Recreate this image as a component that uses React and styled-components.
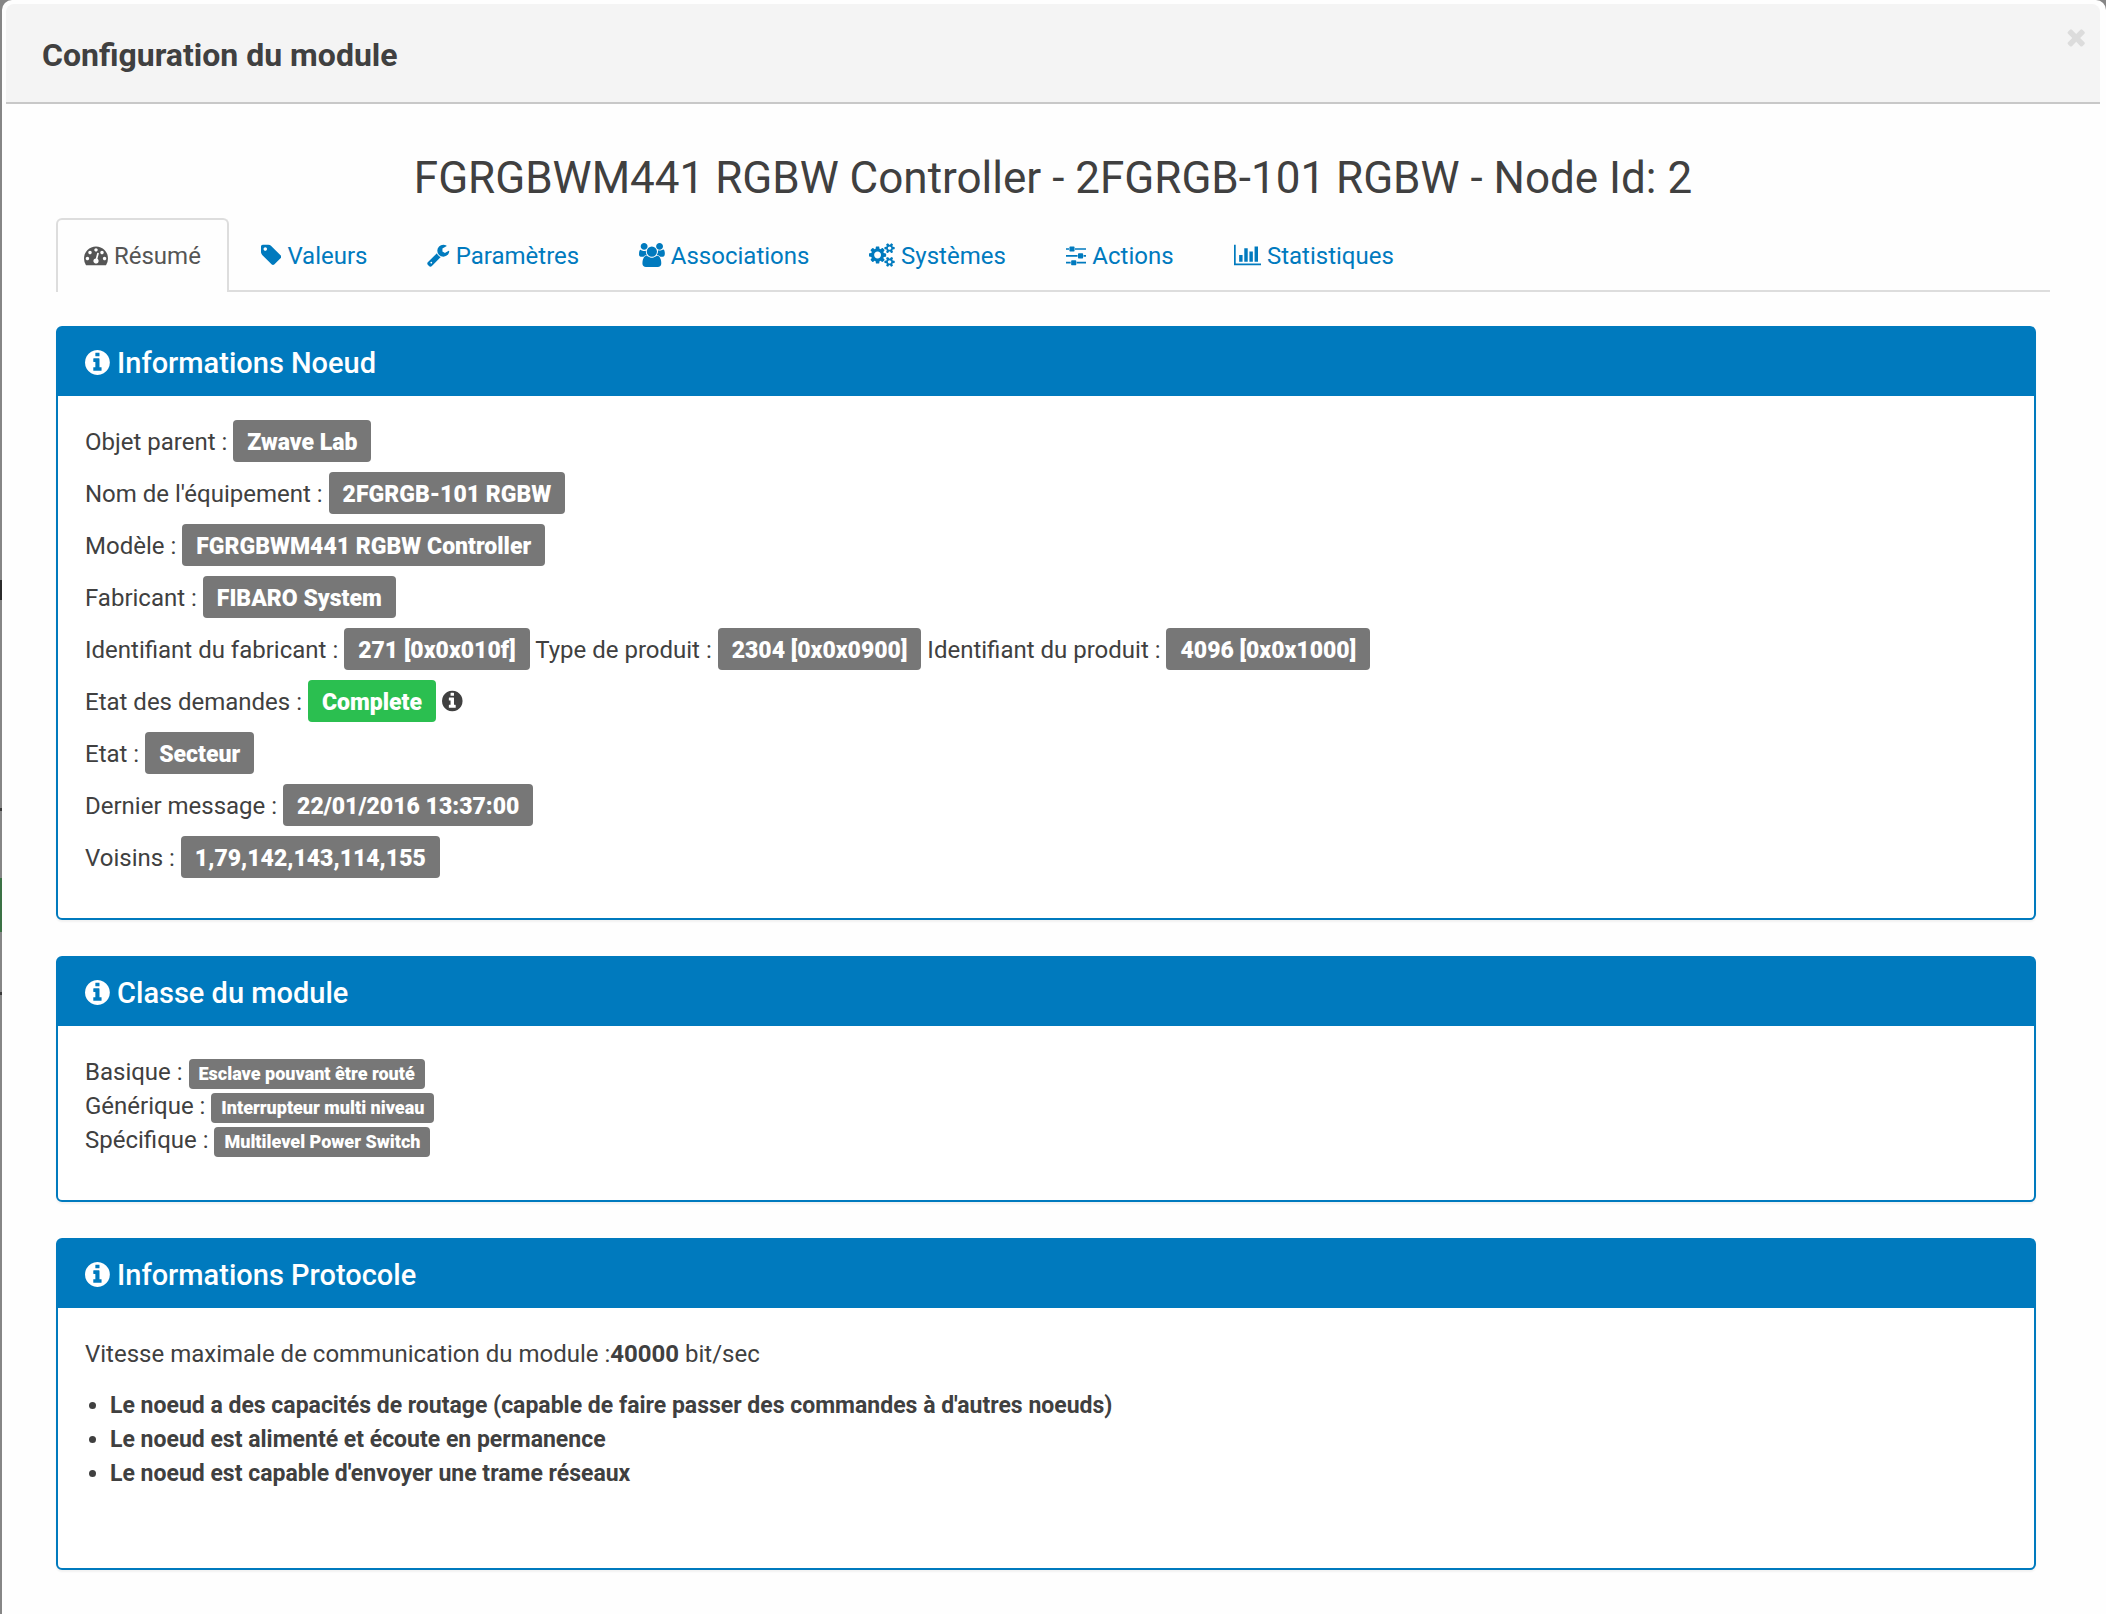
import React from "react";
import styled, { createGlobalStyle } from "styled-components";

const BLUE = "#007abe";

const GlobalStyle = createGlobalStyle`
  *, *::before, *::after { box-sizing: border-box; }
  body {
    margin: 0;
    background: #868686;
    color: #404040;
    font-family: Roboto, "Liberation Sans", sans-serif;
    font-size: 24px;
    line-height: 34px;
  }
`;

/* Sliver of the dimmed page that shows on the left of the dialog */
const Backdrop = styled.div`
  min-height: 100vh;
  padding-left: 2px;
  display: flex;
  background: linear-gradient(
    to bottom,
    #868686 580px, #2b2b2b 580px, #2b2b2b 600px,
    #868686 600px, #868686 808px, #3a3a3a 808px, #3a3a3a 811px,
    #868686 811px, #868686 878px, #3c7245 878px, #3c7245 932px,
    #868686 932px, #868686 992px, #3a3a3a 992px, #3a3a3a 995px,
    #868686 995px
  );
`;

const Dialog = styled.section`
  flex: 1;
  min-width: 0;
  padding: 4px 6px 4px 4px;
  background: #fefefe;
  border-radius: 10px 10px 0 0;
`;

const DialogHeader = styled.header`
  display: flex;
  justify-content: space-between;
  align-items: flex-start;
  padding: 20px 14px 27px 36px;
  background: #f4f4f4;
  border-bottom: 2px solid #c8c8c8;
  border-radius: 8px 8px 0 0;
`;

const DialogTitle = styled.h1`
  margin: 11px 0 0;
  font-size: 32px;
  line-height: 40px;
  font-weight: 700;
`;

const CloseButton = styled.button`
  display: flex;
  padding: 0;
  border: 0;
  background: none;
  color: #dcdcdc;
  font-size: 26px;
  cursor: pointer;
`;

const DialogBody = styled.div`
  padding: 46px 50px 40px;
`;

const NodeTitle = styled.h2`
  margin: 0 0 12px;
  font-size: 44px;
  line-height: 56px;
  font-weight: 400;
  text-align: center;
`;

const Svg = styled.svg`
  height: 1em;
  width: auto;
  vertical-align: -0.14em;
  fill: currentColor;
`;

const TabList = styled.nav`
  display: flex;
  gap: 4px;
  border-bottom: 2px solid #ddd;
`;

const Tab = styled.a`
  margin-bottom: -2px;
  padding: 19px 26px 17px;
  border: 2px solid ${(p) => (p.$active ? "#ddd" : "transparent")};
  border-bottom: ${(p) => (p.$active ? "0" : "2px solid transparent")};
  border-radius: 6px 6px 0 0;
  background: ${(p) => (p.$active ? "#fefefe" : "transparent")};
  color: ${(p) => (p.$active ? "#555" : BLUE)};
  text-decoration: none;
`;

const Panels = styled.div`
  display: flex;
  flex-direction: column;
  gap: 36px;
  padding: 34px 14px 0 0;
`;

const PanelBox = styled.section`
  border: 2px solid ${BLUE};
  border-radius: 6px;
  background: #fff;
  box-shadow: 0 2px 2px rgba(0, 0, 0, 0.05);
`;

const PanelTitle = styled.h3`
  margin: 0;
  padding: 18px 27px 16px;
  background: ${BLUE};
  color: #fff;
  font-size: 29px;
  line-height: 34px;
  font-weight: 500;
`;

const PanelBody = styled.div`
  display: flex;
  flex-direction: column;
  gap: ${(p) => (p.$dense ? "0" : "18px")};
  padding: 29px 27px ${(p) => (p.$tall ? "77px" : "43px")};
`;

const Row = styled.p`
  margin: 0;
`;

const Label = styled.span`
  padding: ${(p) => (p.$small ? "4px 10px 5px" : "9px 14px 6px")};
  border-radius: 4px;
  background: ${(p) => (p.$success ? "#2bbf50" : "#777")};
  color: #fff;
  font-size: ${(p) => (p.$small ? "18px" : "23px")};
  line-height: 1;
  font-weight: 900;
`;

const Capabilities = styled.ul`
  margin: 0;
  padding-left: 25px;
  font-size: 23px;
  font-weight: 700;
`;

const ICONS = {
  info: ["128 0 1536 1792", "M1152 1376v-160q0-14-9-23t-23-9h-96v-512q0-14-9-23t-23-9h-320q-14 0-23 9t-9 23v160q0 14 9 23t23 9h96v320h-96q-14 0-23 9t-9 23v160q0 14 9 23t23 9h448q14 0 23-9t9-23zm-128-896v-160q0-14-9-23t-23-9h-192q-14 0-23 9t-9 23v160q0 14 9 23t23 9h192q14 0 23-9t9-23zm640 416q0 209-103 385.5t-279.5 279.5-385.5 103-385.5-103-279.5-279.5-103-385.5 103-385.5 279.5-279.5 385.5-103 385.5 103 279.5 279.5 103 385.5z"],
  gauge: ["0 0 1792 1792", "M384 1152q0-53-37.5-90.5t-90.5-37.5-90.5 37.5-37.5 90.5 37.5 90.5 90.5 37.5 90.5-37.5 37.5-90.5zm192-448q0-53-37.5-90.5t-90.5-37.5-90.5 37.5-37.5 90.5 37.5 90.5 90.5 37.5 90.5-37.5 37.5-90.5zm428 481l101-382q6-26-7.5-48.5t-38.5-29.5-48 6.5-30 39.5l-101 382q-60 5-107 43.5t-63 98.5q-20 77 20 146t117 89 146-20 89-117q16-60-6-117t-72-91zm660-33q0-53-37.5-90.5t-90.5-37.5-90.5 37.5-37.5 90.5 37.5 90.5 90.5 37.5 90.5-37.5 37.5-90.5zm-640-640q0-53-37.5-90.5t-90.5-37.5-90.5 37.5-37.5 90.5 37.5 90.5 90.5 37.5 90.5-37.5 37.5-90.5zm448 192q0-53-37.5-90.5t-90.5-37.5-90.5 37.5-37.5 90.5 37.5 90.5 90.5 37.5 90.5-37.5 37.5-90.5zm320 448q0 261-141 483-19 29-54 29h-1402q-35 0-54-29-141-221-141-483 0-182 71-348t191-286 286-191 348-71 348 71 286 191 191 286 71 348z"],
  tag: ["128 0 1536 1792", "M576 448q0-53-37.5-90.5t-90.5-37.5-90.5 37.5-37.5 90.5 37.5 90.5 90.5 37.5 90.5-37.5 37.5-90.5zm1067 576q0 53-37 90l-491 492q-39 37-91 37-53 0-90-37l-715-716q-38-37-64.5-101t-26.5-117v-416q0-52 38-90t90-38h416q53 0 117 26.5t102 64.5l715 714q37 39 37 91z"],
  wrench: ["64 0 1664 1792", "M448 1472q0-26-19-45t-45-19-45 19-19 45 19 45 45 19 45-19 19-45zm644-420l-682 682q-37 37-90 37-52 0-91-37l-106-108q-38-36-38-90 0-53 38-91l681-681q39 98 114.5 173.5t173.5 114.5zm634-435q0 39-23 106-47 134-164.5 217.5t-258.5 83.5q-185 0-316.5-131.5t-131.5-316.5 131.5-316.5 316.5-131.5q58 0 121.5 16.5t107.5 46.5q16 11 16 28t-16 28l-293 169v224l193 107q5-3 79-48.5t135.5-81 70.5-35.5q15 0 23.5 10t8.5 25z"],
  users: ["0 0 1920 1792", "M593 896q-162 5-265 128h-134q-82 0-138-40.5t-56-118.5q0-353 124-353 6 0 43.5 21t97.5 42.5 119 21.5q67 0 133-23-5 37-5 66 0 159 93 286zm1071 637q0 120-73 189.5t-194 69.5h-874q-121 0-194-69.5t-73-189.5q0-53 3.5-103.5t14-109 26.5-108.5 43-97.5 62-81 85.5-53.5 111.5-20q10 0 43 21.5t73 48 107 48 135 21.5 135-21.5 107-48 73-48 43-21.5q61 0 111.5 20t85.5 53.5 62 81 43 97.5 26.5 108.5 14 109 3.5 103.5zm-1024-1277q0 106-75 181t-181 75-181-75-75-181 75-181 181-75 181 75 75 181zm704 384q0 159-112.5 271.5t-271.5 112.5-271.5-112.5-112.5-271.5 112.5-271.5 271.5-112.5 271.5 112.5 112.5 271.5zm576 225q0 78-56 118.5t-138 40.5h-134q-103-123-265-128 93-127 93-286 0-29-5-66 66 23 133 23 59 0 119-21.5t97.5-42.5 43.5-21q124 0 124 353zm-128-609q0 106-75 181t-181 75-181-75-75-181 75-181 181-75 181 75 75 181z"],
  cogs: ["0 0 1920 1792", "M896 896q0-106-75-181t-181-75-181 75-75 181 75 181 181 75 181-75 75-181zm768 512q0-52-38-90t-90-38-90 38-38 90q0 53 37.5 90.5t90.5 37.5 90.5-37.5 37.5-90.5zm0-1024q0-52-38-90t-90-38-90 38-38 90q0 53 37.5 90.5t90.5 37.5 90.5-37.5 37.5-90.5zm-384 421v185q0 10-7 19.5t-16 10.5l-155 24q-11 35-32 76 34 48 90 115 7 11 7 20 0 12-7 19-23 30-82.5 89.5t-78.5 59.5q-11 0-21-7l-115-90q-37 19-77 31-11 108-23 155-7 24-30 24h-186q-11 0-20-7.5t-10-17.5l-23-153q-34-10-75-31l-118 89q-7 7-20 7-11 0-21-8-144-133-144-160 0-9 7-19 10-14 41-53t47-61q-23-44-35-82l-152-24q-10-1-17-9.5t-7-19.5v-185q0-10 7-19.5t16-10.5l155-24q11-35 32-76-34-48-90-115-7-11-7-20 0-12 7-20 22-30 82-89t79-59q11 0 21 7l115 90q34-18 77-32 11-108 23-154 7-24 30-24h186q11 0 20 7.5t10 17.5l23 153q34 10 75 31l118-89q8-7 20-7 11 0 21 8 144 133 144 160 0 8-7 19-12 16-42 54t-45 60q23 48 34 82l152 23q10 2 17 10.5t7 19.5zm640 533v140q0 16-149 31-12 27-30 52 51 113 51 138 0 4-4 7-122 71-124 71-8 0-46-47t-52-68q-20 2-30 2t-30-2q-14 21-52 68t-46 47q-2 0-124-71-4-3-4-7 0-25 51-138-18-25-30-52-149-15-149-31v-140q0-16 149-31 13-29 30-52-51-113-51-138 0-4 4-7 4-2 35-20t59-34 30-16q8 0 46 46.5t52 67.5q20-2 30-2t30 2q51-71 92-112l6-2q4 0 124 70 4 3 4 7 0 25-51 138 17 23 30 52 149 15 149 31zm0-1024v140q0 16-149 31-12 27-30 52 51 113 51 138 0 4-4 7-122 71-124 71-8 0-46-47t-52-68q-20 2-30 2t-30-2q-14 21-52 68t-46 47q-2 0-124-71-4-3-4-7 0-25 51-138-18-25-30-52-149-15-149-31v-140q0-16 149-31 13-29 30-52-51-113-51-138 0-4 4-7 4-2 35-20t59-34 30-16q8 0 46 46.5t52 67.5q20-2 30-2t30 2q51-71 92-112l6-2q4 0 124 70 4 3 4 7 0 25-51 138 17 23 30 52 149 15 149 31z"],
  sliders: ["0 0 1536 1792", "M352 1408v128h-352v-128h352zm352-128q26 0 45 19t19 45v256q0 26-19 45t-45 19h-256q-26 0-45-19t-19-45v-256q0-26 19-45t45-19h256zm160-384v128h-864v-128h864zm-640-512v128h-224v-128h224zm1312 1024v128h-736v-128h736zm-960-1152q26 0 45 19t19 45v256q0 26-19 45t-45 19h-256q-26 0-45-19t-19-45v-256q0-26 19-45t45-19h256zm640 512q26 0 45 19t19 45v256q0 26-19 45t-45 19h-256q-26 0-45-19t-19-45v-256q0-26 19-45t45-19h256zm320 128v128h-224v-128h224zm0-512v128h-864v-128h864z"],
  chart: ["0 0 2048 1792", "M640 896v512h-256v-512h256zm384-512v1024h-256v-1024h256zm1024 1152v128h-2048v-1536h128v1408h1920zm-640-896v768h-256v-768h256zm384-384v1152h-256v-1152h256z"],
  times: ["192 0 1408 1792", "M1490 1322q0 40-28 68l-136 136q-28 28-68 28t-68-28l-294-294-294 294q-28 28-68 28t-68-28l-136-136q-28-28-28-68t28-68l294-294-294-294q-28-28-28-68t28-68l136-136q28-28 68-28t68 28l294 294 294-294q28-28 68-28t68 28l136 136q28 28 28 68t-28 68l-294 294 294 294q28 28 28 68z"],
};

function Icon({ name }) {
  const [viewBox, d] = ICONS[name];
  return (
    <Svg viewBox={viewBox} aria-hidden="true">
      <path d={d} />
    </Svg>
  );
}

const TABS = [
  ["gauge", "Résumé"],
  ["tag", "Valeurs"],
  ["wrench", "Paramètres"],
  ["users", "Associations"],
  ["cogs", "Systèmes"],
  ["sliders", "Actions"],
  ["chart", "Statistiques"],
];

function Panel({ title, dense, tall, children }) {
  return (
    <PanelBox>
      <PanelTitle>
        <Icon name="info" /> {title}
      </PanelTitle>
      <PanelBody $dense={dense} $tall={tall}>{children}</PanelBody>
    </PanelBox>
  );
}

export default function App() {
  return (
    <>
      <GlobalStyle />
      <Backdrop>
        <Dialog role="dialog" aria-labelledby="dialog-title">
          <DialogHeader>
            <DialogTitle id="dialog-title">Configuration du module</DialogTitle>
            <CloseButton type="button" aria-label="Fermer">
              <Icon name="times" />
            </CloseButton>
          </DialogHeader>
          <DialogBody>
            <NodeTitle>FGRGBWM441 RGBW Controller - 2FGRGB-101 RGBW - Node Id: 2</NodeTitle>
            <TabList>
              {TABS.map(([icon, text], i) => (
                <Tab key={text} href={`#${icon}`} $active={i === 0}>
                  <Icon name={icon} /> {text}
                </Tab>
              ))}
            </TabList>
            <Panels>
              <Panel title="Informations Noeud">
                <Row>Objet parent : <Label>Zwave Lab</Label></Row>
                <Row>Nom de l'équipement : <Label>2FGRGB-101 RGBW</Label></Row>
                <Row>Modèle : <Label>FGRGBWM441 RGBW Controller</Label></Row>
                <Row>Fabricant : <Label>FIBARO System</Label></Row>
                <Row>
                  Identifiant du fabricant : <Label>271 [0x0x010f]</Label>{" "}
                  Type de produit : <Label>2304 [0x0x0900]</Label>{" "}
                  Identifiant du produit : <Label>4096 [0x0x1000]</Label>
                </Row>
                <Row>
                  Etat des demandes : <Label $success>Complete</Label> <Icon name="info" />
                </Row>
                <Row>Etat : <Label>Secteur</Label></Row>
                <Row>Dernier message : <Label>22/01/2016 13:37:00</Label></Row>
                <Row>Voisins : <Label>1,79,142,143,114,155</Label></Row>
              </Panel>
              <Panel title="Classe du module" dense>
                <Row>Basique : <Label $small>Esclave pouvant être routé</Label></Row>
                <Row>Générique : <Label $small>Interrupteur multi niveau</Label></Row>
                <Row>Spécifique : <Label $small>Multilevel Power Switch</Label></Row>
              </Panel>
              <Panel title="Informations Protocole" tall>
                <Row>Vitesse maximale de communication du module :<strong>40000</strong> bit/sec</Row>
                <Capabilities>
                  <li>Le noeud a des capacités de routage (capable de faire passer des commandes à d'autres noeuds)</li>
                  <li>Le noeud est alimenté et écoute en permanence</li>
                  <li>Le noeud est capable d'envoyer une trame réseaux</li>
                </Capabilities>
              </Panel>
            </Panels>
          </DialogBody>
        </Dialog>
      </Backdrop>
    </>
  );
}
